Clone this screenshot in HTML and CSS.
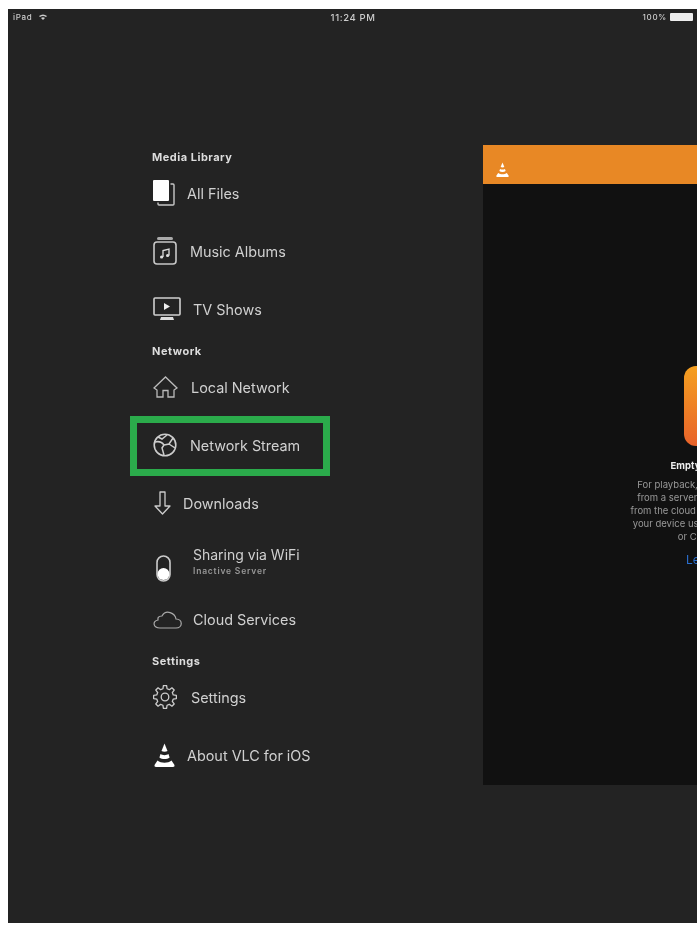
FILE: index.html
```html
<!DOCTYPE html>
<html lang="en">
<head>
    <meta charset="UTF-8">
    <meta name="viewport" content="width=device-width, initial-scale=1.0">
    <title>VLC for iOS - Network Stream</title>
    <link rel="stylesheet" href="styles.css">
</head>
<body>
    <svg class="defs" width="0" height="0">
        <symbol id="cone" viewBox="0 0 21 24">
            <path fill="#fff" d="M10.5 .5 13.5 8C12 9 9 9 7.5 8Z"/>
            <path fill="#fff" d="M6.5 11C8.5 12.5 12.5 12.5 14.5 11L15.6 14.5C13 16.5 8 16.5 5.4 14.5Z"/>
            <path fill="#fff" d="M3.5 17.5C7 20.5 14 20.5 17.5 17.5L20.5 22Q21 24 19 24H2Q0 24 .5 22Z"/>
        </symbol>
    </svg>
    <div class="screen">
        <div class="status-bar">
            <div class="status-left">
                <span>iPad</span>
                <svg class="wifi" viewBox="0 0 8 6"><path fill="#ccc" d="M0 2Q4-1 8 2L7 3Q4 1 1 3ZM2 4Q4 2.500 6 4L4 6Z"/></svg>
            </div>
            <span class="status-time">11:24 PM</span>
            <div class="status-right">
                <span>100%</span>
                <div class="battery"></div>
            </div>
        </div>
        <main class="main">
            <nav class="menu">
                <h3 class="menu-label first">Media Library</h3>
                <a class="menu-row">
                    <svg class="icon icon-files" viewBox="0 0 22 26">
                        <rect width="16" height="21" rx="1" fill="#fff"/>
                        <path fill="none" stroke="#c8c8c8" stroke-width="1.4" d="M17.500 4H20Q21 4 21 5V24Q21 25 20 25H6Q5 25 5 24V22.500"/>
                    </svg>
                    <span>All Files</span>
                </a>
                <a class="menu-row">
                    <svg class="icon icon-music" viewBox="0 0 24 28">
                        <rect x="4" y="0" width="16" height="3" rx="1.500" fill="#aaa"/>
                        <rect x="1" y="5" width="22" height="22" rx="3" fill="none" stroke="#c8c8c8" stroke-width="1.600"/>
                        <path fill="none" stroke="#ddd" stroke-width="1.300" d="M10 20V13.500L16 12V18.500"/>
                        <circle cx="8.600" cy="20" r="1.600" fill="#ddd"/>
                        <circle cx="14.600" cy="18.500" r="1.600" fill="#ddd"/>
                    </svg>
                    <span>Music Albums</span>
                </a>
                <a class="menu-row">
                    <svg class="icon icon-tv" viewBox="0 0 28 24">
                        <rect x="1" y="1" width="26" height="17" rx="1" fill="none" stroke="#d0d0d0" stroke-width="1.600"/>
                        <path fill="#eee" d="M11 6 17 9.500 11 13Z"/>
                        <path fill="#ddd" d="M8 20H20L21 23H7Z"/>
                    </svg>
                    <span>TV Shows</span>
                </a>

                <h3 class="menu-label">Network</h3>
                <a class="menu-row">
                    <svg class="icon icon-home" viewBox="0 0 25 22">
                        <path fill="none" stroke="#bbb" stroke-width="1.300" d="M1 12 12.500 1 24 12 21 14V21H15V14.500H10V21H4V14Z"/>
                    </svg>
                    <span>Local Network</span>
                </a>
                <a class="menu-row stream">
                    <svg class="icon icon-globe" viewBox="0 0 24 24">
                        <circle cx="12" cy="12" r="10.800" fill="none" stroke="#ccc" stroke-width="1.600"/>
                        <path fill="none" stroke="#ccc" stroke-width="1.500" d="M2 9C6 8 9 9 11 12L9 15 11 22M11 12 16 11 20 5M16 11 22 15M5 4 9 6 14 2"/>
                    </svg>
                    <span>Network Stream</span>
                </a>
                <a class="menu-row">
                    <svg class="icon icon-down" viewBox="0 0 19 24">
                        <path fill="none" stroke="#ccc" stroke-width="1.300" stroke-linejoin="round" d="M7 1H12V15H17L9.500 23 2 15H7Z"/>
                    </svg>
                    <span>Downloads</span>
                </a>
                <a class="menu-row">
                    <svg class="icon icon-toggle" viewBox="0 0 17 27">
                        <rect x="2" y="1" width="13" height="25" rx="6.500" fill="none" stroke="#ccc" stroke-width="1.600"/>
                        <circle cx="8.500" cy="19" r="6" fill="#fff"/>
                    </svg>
                    <div class="row-text">
                        <span>Sharing via WiFi</span>
                        <small>Inactive Server</small>
                    </div>
                </a>
                <a class="menu-row">
                    <svg class="icon icon-cloud" viewBox="0 0 29 19">
                        <path fill="none" stroke="#aaa" stroke-width="1.200" d="M7 18H23C30 18 30 9 23 9 22 3 13 -1 9 6 4 6 5 9 5 10 -1 11 0 18 7 18Z"/>
                    </svg>
                    <span>Cloud Services</span>
                </a>

                <h3 class="menu-label">Settings</h3>
                <a class="menu-row">
                    <svg class="icon icon-gear" viewBox="0 0 24 24">
                        <path fill="none" stroke="#ccc" stroke-width="1.300" stroke-linejoin="round" d="M20.250 9.940 23.390 10.400V13.600L20.250 14.060 19.290 16.380 21.180 18.920 18.920 21.180 16.380 19.290 14.060 20.250 13.600 23.390H10.400L9.940 20.250 7.620 19.290 5.080 21.180 2.820 18.920 4.710 16.380 3.750 14.060 .61 13.600V10.400L3.750 9.940 4.710 7.620 2.820 5.080 5.080 2.820 7.620 4.710 9.940 3.750 10.400 .61H13.600L14.060 3.750 16.380 4.710 18.920 2.820 21.180 5.080 19.290 7.620Z"/>
                        <circle cx="12" cy="12" r="3.800" fill="none" stroke="#ccc" stroke-width="1.300"/>
                    </svg>
                    <span>Settings</span>
                </a>
                <a class="menu-row">
                    <svg class="icon icon-cone"><use href="#cone"/></svg>
                    <span>About VLC for iOS</span>
                </a>
            </nav>

            <section class="preview">
                <header class="preview-header">
                    <svg class="header-cone"><use href="#cone"/></svg>
                </header>
                <div class="preview-body">
                    <div class="empty-icon"></div>
                    <h4 class="empty-title">Empty Media Library</h4>
                    <p class="empty-text">For playback, you can stream media<br>from a server on your local network,<br>from the cloud or synchronize media to<br>your device using iTunes, WiFi Upload<br>or Cloud services.</p>
                    <a class="empty-link">Learn More</a>
                </div>
            </section>
        </main>
    </div>
</body>
</html>
```

FILE: styles.css
```css
* {
    box-sizing: border-box;
}
html, body {
    height: 100%;
}
body {
    margin: 0;
    padding: 9px 3px 5px 8px;
    background: #fff;
    font-family: 'Inter', 'Liberation Sans', sans-serif;
    color: #ddd;
    overflow: hidden;
}
.defs {
    display: block;
    height: 0;
}
.screen {
    height: 914px;
    background: #232323;
    overflow: hidden;
    filter: blur(0.7px);
}

/* status bar */
.status-bar {
    height: 16px;
    padding: 0 4px 0 5px;
    display: grid;
    grid-template-columns: 1fr auto 1fr;
    align-items: center;
    font-size: 8px;
    font-weight: 500;
    letter-spacing: 0.7px;
    color: #ccc;
}
.status-left {
    display: flex;
    align-items: center;
    gap: 7px;
}
.wifi {
    width: 8px;
    height: 6px;
}
.status-time {
    font-size: 9.5px;
    letter-spacing: 0.6px;
}
.status-right {
    display: flex;
    justify-content: flex-end;
    align-items: center;
    gap: 3px;
}
.battery {
    width: 23px;
    height: 8px;
    background: #eee;
    border-radius: 1px;
}

/* layout */
.main {
    display: flex;
    padding-left: 144px;
}
.menu {
    width: 178px;
    padding-top: 125px;
    flex-shrink: 0;
}

/* menu */
.menu-label {
    margin: 6px 0 0;
    height: 14px;
    line-height: 14px;
    font-size: 11px;
    letter-spacing: 0.5px;
    font-weight: 700;
    color: #ddd;
}
.menu-label.first {
    margin-top: 0;
}
.menu-row {
    position: relative;
    display: flex;
    align-items: center;
    height: 58px;
    padding-left: 1px;
    font-size: 14.4px;
    color: #d0d0d0;
    white-space: nowrap;
}
.stream::after {
    content: "";
    position: absolute;
    left: -22px;
    right: 0;
    top: 0;
    bottom: -2px;
    border: 7.5px solid #2bab4b;
}
.row-text {
    display: flex;
    flex-direction: column;
    gap: 3px;
    font-size: 14px;
}
.row-text small {
    font-size: 8.5px;
    letter-spacing: 0.8px;
    font-weight: 600;
    color: #999;
}
.icon {
    flex-shrink: 0;
}
.icon-files { width: 22px; height: 26px; margin-right: 12px; }
.icon-music { width: 24px; height: 28px; margin-right: 13px; }
.icon-tv { width: 28px; height: 24px; margin-right: 12px; }
.icon-home { width: 25px; height: 22px; margin-right: 13px; }
.icon-globe { width: 24px; height: 24px; margin-right: 13px; }
.icon-down { width: 19px; height: 24px; margin-right: 11px; }
.icon-toggle { width: 17px; height: 27px; margin: 14px 21px 0 2px; }
.icon-cloud { width: 29px; height: 19px; margin-right: 11px; }
.icon-gear { width: 24px; height: 24px; margin-right: 14px; }
.icon-cone { width: 21px; height: 24px; margin-left: 1px; margin-right: 12px; }

/* preview panel */
.preview {
    width: 471px;
    height: 640px;
    margin-top: 120px;
    margin-left: 153px;
    flex-shrink: 0;
    background: #111;
    display: flex;
    flex-direction: column;
}
.preview-header {
    height: 39px;
    flex-shrink: 0;
    background: #e88825;
    padding: 17px 0 0 13px;
}
.header-cone {
    display: block;
    width: 13px;
    height: 15px;
}
.preview-body {
    padding-top: 182px;
    display: flex;
    flex-direction: column;
    align-items: center;
    text-align: center;
}
.empty-icon {
    width: 70px;
    height: 80px;
    border-radius: 12px;
    background: linear-gradient(#f5a020, #e8622a);
}
.empty-title {
    margin: 13px 0 0;
    font-size: 9.5px;
    line-height: 13px;
    font-weight: 700;
    color: #eee;
}
.empty-text {
    margin: 6px 0 0;
    font-size: 9.5px;
    line-height: 13px;
    color: #999;
    white-space: nowrap;
}
.empty-link {
    margin-top: 9px;
    font-size: 12px;
    line-height: 15px;
    color: #2a6fd0;
}
```
